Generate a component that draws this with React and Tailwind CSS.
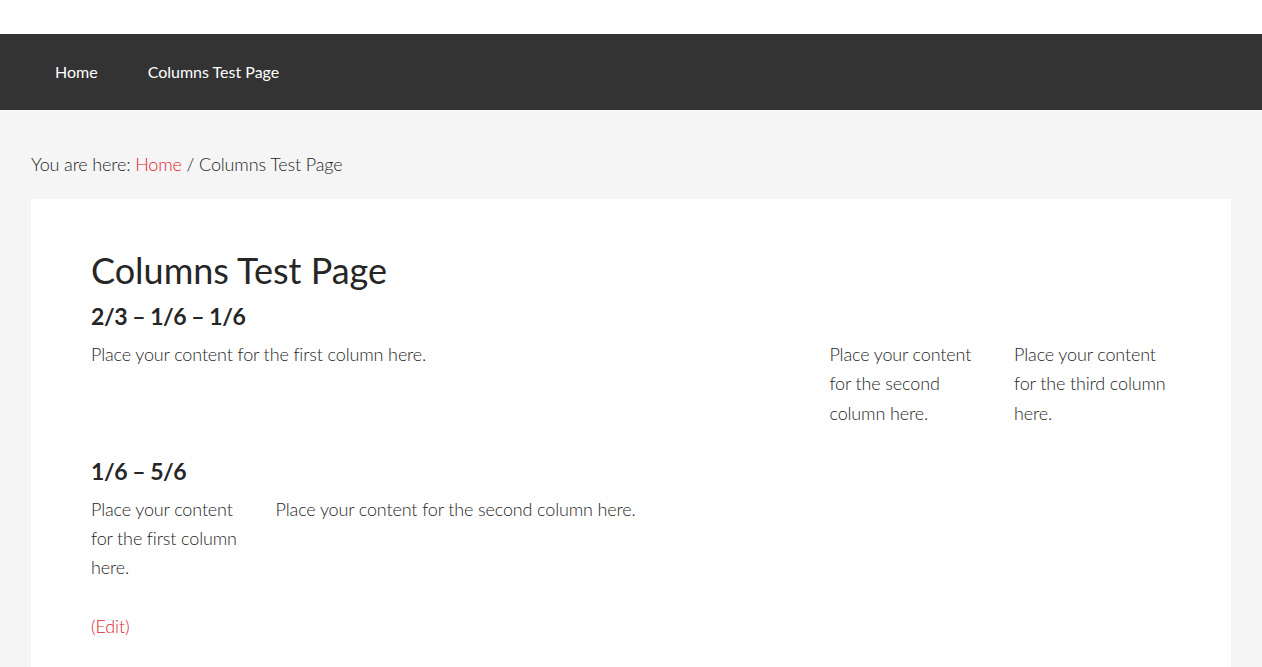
export default function App() {
  return (
    <div className="min-h-[667px] bg-[#f5f5f5] text-[#262626] font-['Lato',sans-serif] font-light text-[18px] leading-[1.625] tracking-[-0.008em]">
      <header className="h-[34px] bg-white" />
      <nav className="bg-[#333] tracking-normal">
        <div className="w-[1200px] mx-auto flex gap-[2px]">
          <a className="block px-[24px] py-[30px] text-[16px] leading-[16px] font-normal text-white">Home</a>
          <a className="block px-[24px] py-[30px] text-[16px] leading-[16px] font-normal text-white">Columns Test Page</a>
        </div>
      </nav>
      <div className="w-[1200px] mx-auto pt-[40px]">
        <div className="mb-[20px]">
          You are here: <a className="text-[#db2530]">Home</a> / Columns Test Page
        </div>
        <article className="bg-white px-[60px] pt-[50px] pb-[50px]">
          <h1 className="text-[36px] leading-[1.2] font-normal mb-[10px] tracking-normal">Columns Test Page</h1>
          <h3 className="text-[23px] leading-[28.8px] font-bold mb-[9px] tracking-[-0.02em]">2/3 – 1/6 – 1/6</h3>
          <div className="flex gap-[2.564102564%]">
            <p className="w-[65.8119658%] mb-[29px]">Place your content for the first column here.</p>
            <p className="w-[14.52991453%] mb-[29px]">Place your content for the second column here.</p>
            <p className="w-[14.52991453%] mb-[29px]">Place your content for the third column here.</p>
          </div>
          <h3 className="text-[23px] leading-[28.8px] font-bold mb-[9px] tracking-[-0.02em]">1/6 – 5/6</h3>
          <div className="flex gap-[2.564102564%]">
            <p className="w-[14.52991453%] mb-[26px]">Place your content for the first column here.</p>
            <p className="w-[82.90598291%] mb-[26px]">Place your content for the second column here.</p>
          </div>
          <footer className="pt-[3px]">
            <a className="text-[#db2530]">(Edit)</a>
          </footer>
        </article>
      </div>
    </div>
  );
}
